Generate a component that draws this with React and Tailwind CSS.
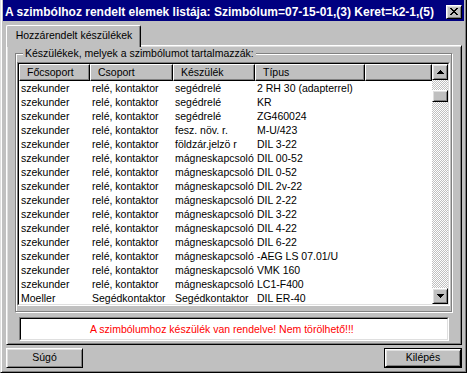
const rows = [
  ['szekunder', 'relé, kontaktor', 'segédrelé', '2 RH 30 (adapterrel)'],
  ['szekunder', 'relé, kontaktor', 'segédrelé', 'KR'],
  ['szekunder', 'relé, kontaktor', 'segédrelé', 'ZG460024'],
  ['szekunder', 'relé, kontaktor', 'fesz. növ. r.', 'M-U/423'],
  ['szekunder', 'relé, kontaktor', 'földzár.jelzö r', 'DIL 3-22'],
  ['szekunder', 'relé, kontaktor', 'mágneskapcsoló', 'DIL 00-52'],
  ['szekunder', 'relé, kontaktor', 'mágneskapcsoló', 'DIL 0-52'],
  ['szekunder', 'relé, kontaktor', 'mágneskapcsoló', 'DIL 2v-22'],
  ['szekunder', 'relé, kontaktor', 'mágneskapcsoló', 'DIL 2-22'],
  ['szekunder', 'relé, kontaktor', 'mágneskapcsoló', 'DIL 3-22'],
  ['szekunder', 'relé, kontaktor', 'mágneskapcsoló', 'DIL 4-22'],
  ['szekunder', 'relé, kontaktor', 'mágneskapcsoló', 'DIL 6-22'],
  ['szekunder', 'relé, kontaktor', 'mágneskapcsoló', '-AEG LS 07.01/U'],
  ['szekunder', 'relé, kontaktor', 'mágneskapcsoló', 'VMK 160'],
  ['szekunder', 'relé, kontaktor', 'mágneskapcsoló', 'LC1-F400'],
  ['Moeller', 'Segédkontaktor', 'Segédkontaktor', 'DIL ER-40'],
]

const columns = [
  { label: 'Főcsoport', width: 'w-[71px]' },
  { label: 'Csoport', width: 'w-[83px]' },
  { label: 'Készülék', width: 'w-[82px]' },
  { label: 'Típus', width: 'w-[110px]' },
  { label: '', width: 'w-[67px]' },
]

const raised =
  'border border-t-white border-l-white border-r-black border-b-black shadow-[inset_1px_1px_#dfdfdf,inset_-1px_-1px_#808080]'

function Arrow({ down }) {
  return (
    <svg width="7" height="4" viewBox="0 0 7 4" shapeRendering="crispEdges">
      {down ? <path d="M0 0H7L3.5 4Z" fill="#000" /> : <path d="M3.5 0L7 4H0Z" fill="#000" />}
    </svg>
  )
}

function Scrollbar() {
  return (
    <div className="w-[16px] flex flex-col">
      <div className={`h-[16px] bg-[#c0c0c0] flex items-center justify-center ${raised}`}>
        <Arrow />
      </div>
      <div className="flex-1 bg-[repeating-conic-gradient(#c0c0c0_0%_25%,#ffffff_0%_50%)] bg-[length:2px_2px]">
        <div className={`mt-[10px] h-[12px] bg-[#c0c0c0] ${raised}`} />
      </div>
      <div className={`h-[16px] bg-[#c0c0c0] flex items-center justify-center ${raised}`}>
        <Arrow down />
      </div>
    </div>
  )
}

export default function App() {
  return (
    <div className="w-[467px] h-[373px] bg-[#c0c0c0] text-black text-[10.5px] font-['Liberation_Sans',Arial,sans-serif] flex flex-col border-l border-l-[#dfdfdf] border-r border-r-black border-b border-b-black shadow-[inset_1px_0_#fff,inset_-1px_-1px_#808080] px-[2px] overflow-hidden">
      {/* Title bar */}
      <div className="h-[21px] shrink-0 bg-[#000080] flex items-center justify-between pl-[2px] pr-[2px] pt-[2px]">
        <span className="text-white font-bold text-[12px] whitespace-nowrap">
          A szimbólhoz rendelt elemek listája: Szimbólum=07-15-01,(3) Keret=k2-1,(5)
        </span>
        <div className={`w-[16px] h-[14px] bg-[#c0c0c0] flex items-center justify-center ${raised}`}>
          <svg width="8" height="7" viewBox="0 0 8 7" shapeRendering="crispEdges">
            <path d="M0 0h2v1h-2zM6 0h2v1h-2zM1 1h2v1h-2zM5 1h2v1h-2zM2 2h4v1h-4zM3 3h2v1h-2zM2 4h4v1h-4zM1 5h2v1h-2zM5 5h2v1h-2zM0 6h2v1h-2zM6 6h2v1h-2z" fill="#000" />
          </svg>
        </div>
      </div>

      <div className="flex flex-col pl-[3px] pr-[2px]">
        {/* Tab */}
        <div className="mt-[4px] flex">
          <div className="relative z-10 -mb-[2px] w-[135px] h-[22px] bg-[#c0c0c0] border-t border-l border-r border-t-white border-l-white border-r-black shadow-[inset_-1px_0_#808080] rounded-t-[2px] flex items-start justify-center pt-[3px] pl-[1px] leading-[13px]">
            Hozzárendelt készülékek
          </div>
        </div>

        {/* Tab panel */}
        <div className="h-[300px] bg-[#c0c0c0] border border-t-white border-l-white border-r-black border-b-black shadow-[inset_1px_1px_#dfdfdf,inset_-1px_-1px_#808080] pt-[7px] pl-[8px] flex flex-col">
          {/* Group box */}
          <div className="relative w-[437px] h-[259px] border border-[#808080] shadow-[1px_1px_0_#fff,inset_1px_1px_0_#fff]">
            <span className="absolute left-[7px] -top-[7px] px-[2px] bg-[#c0c0c0] leading-[13px] whitespace-nowrap">
              Készülékek, melyek a szimbólumot tartalmazzák:
            </span>
            <div className="mt-[8px] ml-[1px] w-[433px] h-[244px] border border-t-[#808080] border-l-[#808080] border-r-white border-b-white flex">
              <div className="flex-1 border border-t-black border-l-black border-r-[#dfdfdf] border-b-[#dfdfdf] bg-white flex overflow-hidden">
                <div className="w-[413px] flex flex-col overflow-hidden">
                  {/* Header */}
                  <div className="flex h-[17px] shrink-0">
                    {columns.map((col, i) => (
                      <div
                        key={i}
                        className={`${col.width} shrink-0 bg-[#c0c0c0] border border-t-white border-l-white border-r-black border-b-black shadow-[inset_-1px_-1px_#808080] pl-[7px] leading-[14px] whitespace-nowrap overflow-hidden`}
                      >
                        {col.label}
                      </div>
                    ))}
                  </div>
                  {/* Rows */}
                  {rows.map((row, r) => (
                    <div key={r} className="flex h-[14px] shrink-0 leading-[14px]">
                      {row.map((cell, c) => (
                        <div
                          key={c}
                          className={`${columns[c].width} shrink-0 pl-[2px] whitespace-nowrap overflow-hidden`}
                        >
                          {cell}
                        </div>
                      ))}
                    </div>
                  ))}
                </div>
                <Scrollbar />
              </div>
            </div>
          </div>

          {/* Message box */}
          <div className="mt-[5px] ml-[4px] w-[430px] h-[24px] border border-t-[#808080] border-l-[#808080] border-r-white border-b-white flex">
            <div className="flex-1 border border-t-black border-l-black border-r-[#dfdfdf] border-b-[#dfdfdf] bg-white flex items-center pl-[69px] pt-[2px] text-[#ff0000] whitespace-nowrap">
              A szimbólumhoz készülék van rendelve! Nem törölhető!!!
            </div>
          </div>
        </div>

        {/* Buttons */}
        <div className="mt-[3px] flex justify-between">
          <button className={`w-[77px] h-[20px] bg-[#c0c0c0] ${raised} flex items-center justify-center`}>
            Súgó
          </button>
          <div className="w-[78px] h-[20px] border border-black flex">
            <button className={`flex-1 bg-[#c0c0c0] ${raised} flex items-center justify-center`}>
              Kilépés
            </button>
          </div>
        </div>
      </div>
    </div>
  )
}
